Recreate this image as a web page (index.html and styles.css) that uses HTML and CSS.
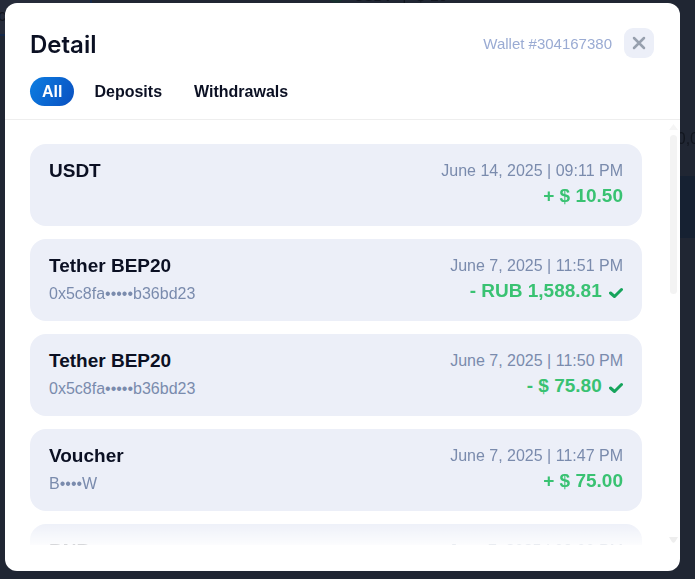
FILE: index.html
```
<!DOCTYPE html>
<html lang="en">
<head>
    <meta charset="UTF-8">
    <meta name="viewport" content="width=device-width, initial-scale=1.0">
    <title>Detail</title>
    <link rel="stylesheet" href="styles.css">
</head>
<body>
    <!-- page under the overlay -->
    <div class="backdrop" aria-hidden="true">
        <div class="backdrop-box">c</div>
        <div class="backdrop-total">
            <i class="coin"></i>
            <b>USDT</b>
            <span>|</span>
            <span>$ 10</span>
        </div>
        <span class="backdrop-sum">0,0</span>
        <div class="backdrop-band"></div>
    </div>

    <div class="modal" role="dialog" aria-labelledby="modal-title">
        <header class="modal-header">
            <div class="title-row">
                <h1 id="modal-title">Detail</h1>
                <span class="wallet">Wallet #304167380</span>
                <button class="close" type="button" aria-label="Close">
                    <svg width="14" height="14" viewBox="0 0 14 14"><path d="M2 2l10 10M12 2L2 12"/></svg>
                </button>
            </div>
            <nav class="tabs">
                <button class="tab active" type="button">All</button>
                <button class="tab" type="button">Deposits</button>
                <button class="tab" type="button">Withdrawals</button>
            </nav>
        </header>

        <div class="list-wrap">
            <ul class="list">
                <li class="card">
                    <div class="info">
                        <h2>USDT</h2>
                    </div>
                    <div class="side">
                        <time>June 14, 2025 | 09:11 PM</time>
                        <div class="amount">+ $ 10.50</div>
                    </div>
                </li>
                <li class="card">
                    <div class="info">
                        <h2>Tether BEP20</h2>
                        <p>0x5c8fa•••••b36bd23</p>
                    </div>
                    <div class="side">
                        <time>June 7, 2025 | 11:51 PM</time>
                        <div class="amount">- RUB 1,588.81
                            <svg class="check" width="14" height="12" viewBox="0 0 14 12"><path d="M1.500 6l4 3.500 7-7"/></svg>
                        </div>
                    </div>
                </li>
                <li class="card">
                    <div class="info">
                        <h2>Tether BEP20</h2>
                        <p>0x5c8fa•••••b36bd23</p>
                    </div>
                    <div class="side">
                        <time>June 7, 2025 | 11:50 PM</time>
                        <div class="amount">- $ 75.80
                            <svg class="check" width="14" height="12" viewBox="0 0 14 12"><path d="M1.500 6l4 3.500 7-7"/></svg>
                        </div>
                    </div>
                </li>
                <li class="card">
                    <div class="info">
                        <h2>Voucher</h2>
                        <p>B••••W</p>
                    </div>
                    <div class="side">
                        <time>June 7, 2025 | 11:47 PM</time>
                        <div class="amount">+ $ 75.00</div>
                    </div>
                </li>
                <li class="card">
                    <div class="info">
                        <h2>BNB</h2>
                    </div>
                    <div class="side">
                        <time>June 7, 2025 | 09:00 PM</time>
                    </div>
                </li>
            </ul>
            <div class="scrollbar">
                <svg width="9" height="6" viewBox="0 0 9 6"><path d="M4.500 0L9 6H0z"/></svg>
                <div class="thumb"></div>
                <svg class="down" width="9" height="6" viewBox="0 0 9 6"><path d="M0 0h9L6 5q-1.500 1.500-3 0z"/></svg>
            </div>
        </div>
    </div>
</body>
</html>
```

FILE: styles.css
```
* {
    box-sizing: border-box;
}
body {
    margin: 0;
    height: 100vh;
    padding: 3px 15px 8px 5px;
    background-color: #202633;
    color: #0b1023;
    font-family: "Liberation Sans", Arial, sans-serif;
    font-size: 16px;
    overflow: hidden;
}
h1, h2, p, ul {
    margin: 0;
    padding: 0;
}
button {
    border: none;
    font-family: inherit;
    cursor: pointer;
}

/* page under the overlay */
.backdrop {
    position: fixed;
    inset: 0;
    color: #12161f;
    font-size: 16px;
    line-height: 18px;
    overflow: hidden;
}
.backdrop-box {
    position: absolute;
    top: 0;
    left: -2px;
    width: 94px;
    height: 36px;
    padding-top: 7px;
    border-right: 2px solid #14284a;
    border-bottom: 2px solid #14284a;
    background-color: #262b3a;
}
.backdrop-total {
    position: absolute;
    top: -13px;
    left: 328px;
    display: flex;
    gap: 10px;
}
.backdrop-total b {
    font-size: 14px;
}
.coin {
    width: 16px;
    height: 16px;
    border-radius: 50%;
    background-color: #17302f;
}
.backdrop-sum {
    position: absolute;
    top: 130px;
    right: -4px;
}
.backdrop-band {
    position: absolute;
    top: 176px;
    right: 0;
    width: 40px;
    height: 62px;
    background-color: #162132;
}

.modal {
    position: relative;
    display: flex;
    flex-direction: column;
    height: 100%;
    padding-bottom: 26px;
    background-color: #fff;
    border-radius: 12px;
    overflow: hidden;
}
.modal-header {
    padding: 23px 26px 13px 25px;
    border-bottom: 1px solid #eee;
}
.title-row {
    display: flex;
    align-items: center;
}
.title-row h1 {
    flex: 1;
    padding-top: 4px;
    font-family: Inter, sans-serif;
    font-size: 24px;
    font-weight: 600;
    line-height: 30px;
}
.wallet {
    margin-right: 12px;
    color: #9aabd3;
    font-size: 15px;
}
.close {
    display: flex;
    align-items: center;
    justify-content: center;
    width: 30px;
    height: 30px;
    padding: 0;
    border-radius: 9px;
    background-color: #eceff8;
}
.close path {
    fill: none;
    stroke: #97a0ae;
    stroke-width: 2.5;
    stroke-linecap: round;
}

.tabs {
    display: flex;
    gap: 8px;
    margin-top: 17px;
}
.tab {
    padding: 0 12px;
    border-radius: 15px;
    background: none;
    color: #0b1023;
    font-size: 16px;
    font-weight: bold;
    line-height: 29px;
}
.tab.active {
    background: linear-gradient(120deg, #0c7ee2, #0a50c0);
    color: #fff;
}

.list-wrap {
    position: relative;
    flex: 1;
    min-height: 0;
    overflow: hidden;
}
/* fades the rows out at the lower edge */
.list-wrap::after {
    content: "";
    position: absolute;
    left: 0;
    right: 16px;
    bottom: 0;
    height: 24px;
    background: linear-gradient(rgba(255, 255, 255, 0), rgba(255, 255, 255, 0.85));
}
.list {
    display: flex;
    flex-direction: column;
    gap: 13px;
    padding: 24px 38px 24px 25px;
    list-style: none;
}
.card {
    display: flex;
    justify-content: space-between;
    min-height: 82px;
    padding: 14px 19px;
    border-radius: 16px;
    background-color: #eceff8;
}
.card h2 {
    font-size: 19px;
    line-height: 26px;
}
.card p, .card time {
    display: block;
    color: #7a8bad;
    font-size: 16px;
    line-height: 26px;
}
.card p {
    margin-top: 2px;
}
.side {
    text-align: right;
}
.amount {
    color: #39c272;
    font-size: 19px;
    font-weight: bold;
    line-height: 24px;
}
.check {
    margin-left: 2px;
    vertical-align: -2px;
}
.check path {
    fill: none;
    stroke: #16a45c;
    stroke-width: 3;
    stroke-linecap: round;
    stroke-linejoin: round;
}

.scrollbar {
    position: absolute;
    top: 4px;
    right: 2px;
    bottom: 2px;
    display: flex;
    flex-direction: column;
    align-items: center;
    width: 9px;
}
.scrollbar svg {
    fill: #f5f5f5;
}
.scrollbar .down {
    margin-top: auto;
    fill: #eee;
}
.thumb {
    width: 7px;
    height: 38%;
    margin-top: 5px;
    border-radius: 4px;
    background-color: #f3f3f3;
}
```
